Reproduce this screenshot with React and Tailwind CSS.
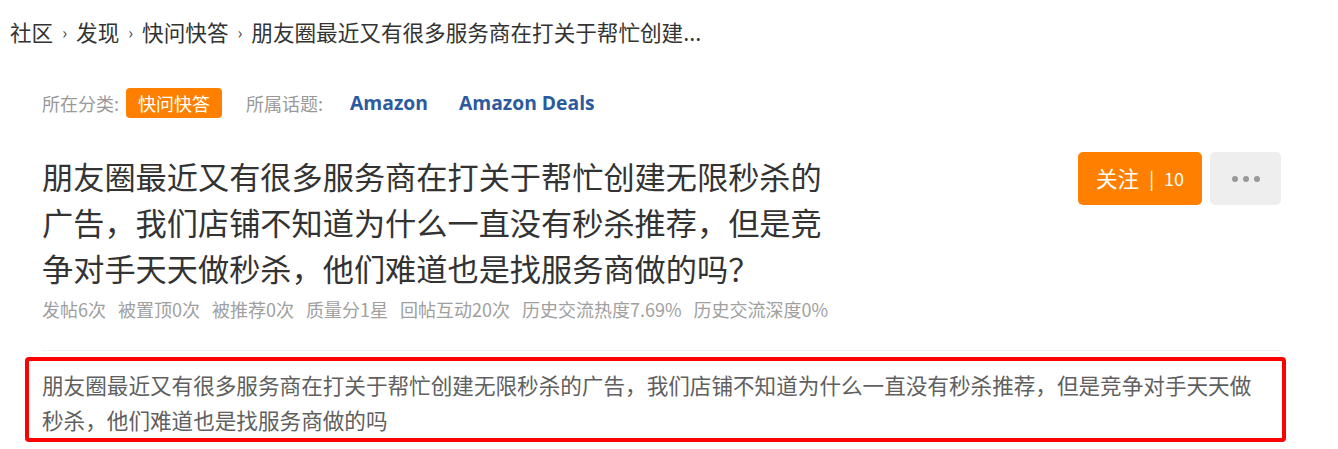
export default function App() {
  const crumbs = ["社区", "发现", "快问快答"];
  const stats = [
    "发帖6次",
    "被置顶0次",
    "被推荐0次",
    "质量分1星",
    "回帖互动20次",
    "历史交流热度7.69%",
    "历史交流深度0%",
  ];

  return (
    <div
      className="w-[1338px] h-[449px] bg-white overflow-hidden"
      style={{ fontFamily: '"Noto Sans CJK SC", "Microsoft YaHei", sans-serif' }}
    >
      {/* 面包屑 */}
      <div className="pl-[10px] pt-[17px] flex items-center text-[21.6px] leading-[30px] text-[#333]">
        {crumbs.map((c) => (
          <span key={c} className="flex items-center">
            <span>{c}</span>
            <span className="mx-[9px] text-[16px] text-[#444]">›</span>
          </span>
        ))}
        <span>朋友圈最近又有很多服务商在打关于帮忙创建...</span>
      </div>

      <div className="ml-[25px] w-[1261px]">
        {/* 分类 / 话题 */}
        <div className="mt-[41px] pl-[17px] flex items-center h-[30px] text-[18px]">
          <span className="text-[#999]">所在分类:</span>
          <span className="ml-[7px] h-[30px] px-[12px] flex items-center rounded-[4px] bg-[#ff8000] text-white">
            快问快答
          </span>
          <span className="ml-[24px] text-[#999]">所属话题:</span>
          <span
            className="ml-[27px] font-bold text-[#2c5a9e] text-[19.3px]"
            style={{ fontFamily: '"Open Sans", sans-serif' }}
          >
            Amazon
          </span>
          <span
            className="ml-[31px] font-bold text-[#2c5a9e] text-[19.3px]"
            style={{ fontFamily: '"Open Sans", sans-serif' }}
          >
            Amazon Deals
          </span>
        </div>

        {/* 标题 + 按钮 */}
        <div className="mt-[34px] pl-[17px] pr-[5px] flex items-start justify-between">
          <h1 className="mt-[1px] w-[795px] text-[31.2px] leading-[46px] font-normal text-[#333]">
            朋友圈最近又有很多服务商在打关于帮忙创建无限秒杀的广告，我们店铺不知道为什么一直没有秒杀推荐，但是竞争对手天天做秒杀，他们难道也是找服务商做的吗？
          </h1>
          <div className="flex gap-[8px]">
            <button className="w-[124px] h-[53px] rounded-[5px] bg-[#ff8000] text-white flex items-center justify-center">
              <span className="text-[21.6px]">关注</span>
              <span className="mx-[10px] text-[18px]">|</span>
              <span className="text-[18px]">10</span>
            </button>
            <button className="w-[71px] h-[53px] rounded-[5px] bg-[#eeeeee] flex items-center justify-center gap-[5px]">
              <span className="w-[6px] h-[6px] rounded-full bg-[#999]" />
              <span className="w-[6px] h-[6px] rounded-full bg-[#999]" />
              <span className="w-[6px] h-[6px] rounded-full bg-[#999]" />
            </button>
          </div>
        </div>

        {/* 统计 */}
        <div className="mt-[6px] pl-[17px] flex gap-[12px] text-[18px] leading-[24px] text-[#a0a0a0]">
          {stats.map((s) => (
            <span key={s}>{s}</span>
          ))}
        </div>

        <div className="mt-[29px] ml-[17px] mr-[6px] h-px bg-[#f2f2f2]" />

        {/* 内容 */}
        <div className="mt-[6px] border-4 border-[#ff0000] rounded-[4px] pl-[13px] pr-[20px] pt-[6px] pb-[1px] text-[21.6px] leading-[35px] text-[#606060]">
          朋友圈最近又有很多服务商在打关于帮忙创建无限秒杀的广告，我们店铺不知道为什么一直没有秒杀推荐，但是竞争对手天天做秒杀，他们难道也是找服务商做的吗
        </div>
      </div>
    </div>
  );
}
